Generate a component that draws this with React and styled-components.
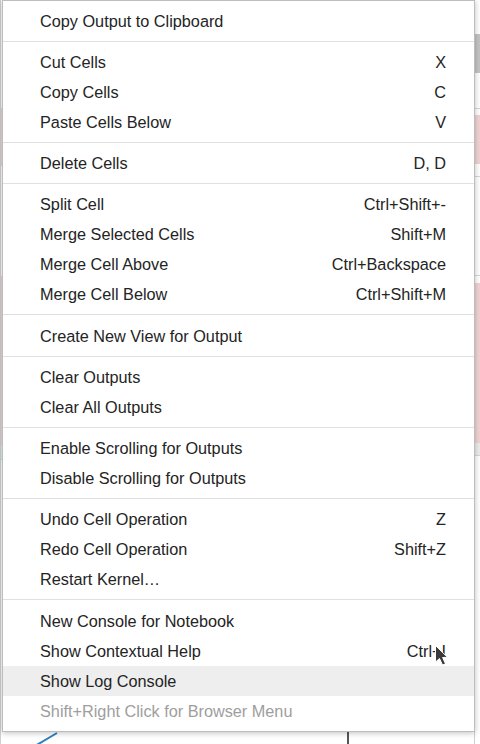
import React from "react";
import styled, { createGlobalStyle } from "styled-components";

const GlobalStyle = createGlobalStyle`
  html, body {
    margin: 0;
    padding: 0;
    background: #ffffff;
  }
  body {
    font-family: "Liberation Sans", Arial, sans-serif;
  }
`;

const Page = styled.div`
  position: relative;
  width: 480px;
  height: 744px;
  overflow: hidden;
  display: flex;
  background: #ffffff;
`;

const LeftGutter = styled.div`
  width: 2px;
  display: flex;
  flex-direction: column;
  border-left: 1px solid #d0d0d0;
`;

const Notebook = styled.div`
  flex: 1;
  position: relative;
`;

const RightGutter = styled.div`
  width: 5px;
  display: flex;
  flex-direction: column;
  border-left: 1px solid #cfcfcf;
`;

const Band = styled.div`
  height: ${(p) => p.h}px;
  background: ${(p) => p.bg || "transparent"};
  border-bottom: ${(p) => (p.line ? "1px solid #d6d6d6" : "none")};
`;

const Menu = styled.ul`
  position: absolute;
  left: 2px;
  top: 0;
  width: 471px;
  margin: 0;
  padding: 5px 0;
  list-style: none;
  background: #ffffff;
  border: 1px solid #bdbdbd;
  box-shadow: 0 1px 6px rgba(0, 0, 0, 0.25);
  z-index: 2;
`;

const Item = styled.li`
  box-sizing: border-box;
  height: 30px;
  display: flex;
  align-items: center;
  justify-content: space-between;
  padding: 0 28px 0 37px;
  font-size: 16.25px;
  color: ${(p) => (p.disabled ? "#9e9e9e" : "#242424")};
  background: ${(p) => (p.active ? "#eeeeee" : "transparent")};
  white-space: nowrap;
`;

const Shortcut = styled.span`
  color: #242424;
`;

const Separator = styled.li`
  height: 11.25px;
  display: flex;
  align-items: center;

  &::before {
    content: "";
    display: block;
    width: 100%;
    height: 1px;
    margin-top: -1px;
    background: #e0e0e0;
  }
`;

const Diagonal = styled.svg`
  position: absolute;
  left: 28px;
  top: 732px;
`;

const VLine = styled.div`
  position: absolute;
  left: 344px;
  top: 732px;
  width: 2px;
  height: 12px;
  background: #555;
`;

const Cursor = styled.svg`
  position: absolute;
  left: 434px;
  top: 644px;
  z-index: 3;
`;

const groups = [
  [["Copy Output to Clipboard"]],
  [
    ["Cut Cells", "X"],
    ["Copy Cells", "C"],
    ["Paste Cells Below", "V"],
  ],
  [["Delete Cells", "D, D"]],
  [
    ["Split Cell", "Ctrl+Shift+-"],
    ["Merge Selected Cells", "Shift+M"],
    ["Merge Cell Above", "Ctrl+Backspace"],
    ["Merge Cell Below", "Ctrl+Shift+M"],
  ],
  [["Create New View for Output"]],
  [["Clear Outputs"], ["Clear All Outputs"]],
  [["Enable Scrolling for Outputs"], ["Disable Scrolling for Outputs"]],
  [
    ["Undo Cell Operation", "Z"],
    ["Redo Cell Operation", "Shift+Z"],
    ["Restart Kernel…"],
  ],
  [
    ["New Console for Notebook"],
    ["Show Contextual Help", "Ctrl+I"],
    ["Show Log Console", null, "active"],
    ["Shift+Right Click for Browser Menu", null, "disabled"],
  ],
];

const rightBands = [
  { h: 34 },
  { h: 39, bg: "#c4c4c4" },
  { h: 35, line: true },
  { h: 6 },
  { h: 49, bg: "#f2d3d3" },
  { h: 12, line: true },
  { h: 98, line: true },
  { h: 7 },
  { h: 160, bg: "#f2d3d3" },
  { h: 12, bg: "#ececec", line: true },
];

const leftBands = [
  { h: 108, line: true },
  { h: 57, bg: "#f0d6d6" },
  { h: 110, line: true },
  { h: 168, bg: "#f0d6d6" },
  { h: 14, bg: "#e2f2f2", line: true },
];

const App = () => {
  return (
    <>
      <GlobalStyle />
      <Page>
        <LeftGutter>
          {leftBands.map((b, i) => (
            <Band key={i} {...b} />
          ))}
        </LeftGutter>
        <Notebook>
          <Diagonal width="40" height="14" viewBox="0 0 40 14">
            <line x1="4" y1="14" x2="26" y2="1" stroke="#2f7fc0" strokeWidth="2" />
          </Diagonal>
          <VLine />
        </Notebook>
        <RightGutter>
          {rightBands.map((b, i) => (
            <Band key={i} {...b} />
          ))}
        </RightGutter>

        <Menu>
          {groups.map((group, gi) => (
            <React.Fragment key={gi}>
              {gi > 0 && <Separator />}
              {group.map(([label, key, state]) => (
                <Item
                  key={label}
                  active={state === "active"}
                  disabled={state === "disabled"}
                >
                  <span>{label}</span>
                  {key && <Shortcut>{key}</Shortcut>}
                </Item>
              ))}
            </React.Fragment>
          ))}
        </Menu>

        <Cursor width="15" height="23" viewBox="0 0 15 23">
          <path
            d="M1.5 1.5 L1.5 18 L5.5 14.5 L8.5 21 L11.5 19.8 L8.6 13.5 L13.5 13.3 Z"
            fill="#3a3a3a"
            stroke="#ffffff"
            strokeWidth="1"
            strokeLinejoin="round"
          />
        </Cursor>
      </Page>
    </>
  );
};

export default App;
